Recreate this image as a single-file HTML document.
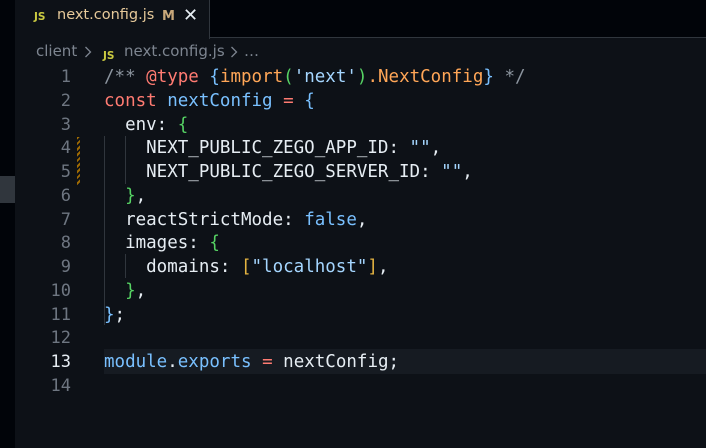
<!DOCTYPE html>
<html><head><meta charset="utf-8"><style>
*{margin:0;padding:0;box-sizing:border-box}
body{width:706px;height:448px;background:#0d1117;position:relative;overflow:hidden;font-family:"DejaVu Sans Mono",monospace}
.strip{position:absolute;left:0;top:0;width:15px;height:448px;background:#010409}
.strip .b{position:absolute;left:0;top:176px;width:15px;height:27px;background:#30363d}
.tabbar{position:absolute;left:15px;top:0;right:0;height:38px;background:#010409;border-bottom:1px solid #30363d}
.tab{position:absolute;left:0;top:0;width:195px;height:39px;background:#0d1117;border-right:1px solid #30363d;font-family:"DejaVu Sans",sans-serif;font-size:14.5px;color:#e6c99a}
.js{color:#cbcb41;font-weight:bold;font-size:10.5px;font-family:"DejaVu Sans",sans-serif}
.crumb{position:absolute;top:42px;font-family:"DejaVu Sans",sans-serif;font-size:15px;color:#7d8590;white-space:pre}
.chev{position:absolute;top:45px}
.ln{position:absolute;left:15px;width:56px;text-align:right;font-size:17px;color:#6e7681;line-height:23.75px}
.code{position:absolute;left:104px;font-size:17.5px;line-height:23.75px;color:#e6edf3;white-space:pre}
.hl{position:absolute;left:104px;top:349px;width:602px;height:25px;background:#161b22}
.g{position:absolute;width:1px;background:#30363d}
.c{color:#8b949e}.k{color:#ff7b72}.v{color:#79c0ff}.o{color:#ffa657}.s{color:#a5d6ff}.p{color:#56d364}.y{color:#e3b341}.bl{color:#79c0ff}
</style></head><body>
<div class="strip"><div class="b"></div></div>
<div class="tabbar"><div class="tab">
<span class="js" style="position:absolute;left:19px;top:11px">JS</span>
<span style="position:absolute;left:42px;top:7px">next.config.js</span>
<span style="position:absolute;left:147px;top:9px;font-size:13px;color:#c9a87a;font-weight:bold">M</span>
<span style="position:absolute;left:168px;top:5px;font-size:18px;color:#e6edf3">✕</span>
</div></div>
<div class="crumb" style="left:36px">client</div>
<svg class="chev" style="left:84px" width="8" height="14"><path d="M1.5 2 L6.5 7 L1.5 12" stroke="#7d8590" stroke-width="1.3" fill="none"/></svg>
<div class="crumb" style="left:103px;top:45px"><span class="js">JS</span></div>
<div class="crumb" style="left:124px">next.config.js</div>
<svg class="chev" style="left:230px" width="8" height="14"><path d="M1.5 2 L6.5 7 L1.5 12" stroke="#7d8590" stroke-width="1.3" fill="none"/></svg>
<div class="crumb" style="left:244px">…</div>
<div class="hl"></div>
<div class="g" style="left:104px;top:136px;height:189px"></div>
<div class="g" style="left:125px;top:136px;height:48px"></div>
<div class="g" style="left:125px;top:254px;height:24px"></div>
<div style="position:absolute;left:77px;top:137px;width:3px;height:48px;background:repeating-linear-gradient(135deg,#9e6a03 0 2px,transparent 2px 4px)"></div>
<div class="ln" style="top:66px">1<br>2<br>3<br>4<br>5<br>6<br>7<br>8<br>9<br>10<br>11<br>12<br><span style="color:#e6edf3">13</span><br>14</div>
<div class="code" style="top:66px"><span class="c">/** </span><span class="k">@type</span><span class="c"> </span><span class="bl">{</span><span class="o">import</span><span class="p">(</span><span class="s">'next'</span><span class="p">)</span><span class="o">.NextConfig</span><span class="bl">}</span><span class="c"> */</span>
<span class="k">const</span> <span class="v">nextConfig</span> <span class="k">=</span> <span class="bl">{</span>
  env: <span class="p">{</span>
    NEXT_PUBLIC_ZEGO_APP_ID: <span class="s">""</span>,
    NEXT_PUBLIC_ZEGO_SERVER_ID: <span class="s">""</span>,
  <span class="p">}</span>,
  reactStrictMode: <span class="v">false</span>,
  images: <span class="p">{</span>
    domains: <span class="y">[</span><span class="s">"localhost"</span><span class="y">]</span>,
  <span class="p">}</span>,
<span class="bl">}</span>;

<span class="v">module</span>.<span class="v">exports</span> <span class="k">=</span> nextConfig;
</div>
</body></html>
